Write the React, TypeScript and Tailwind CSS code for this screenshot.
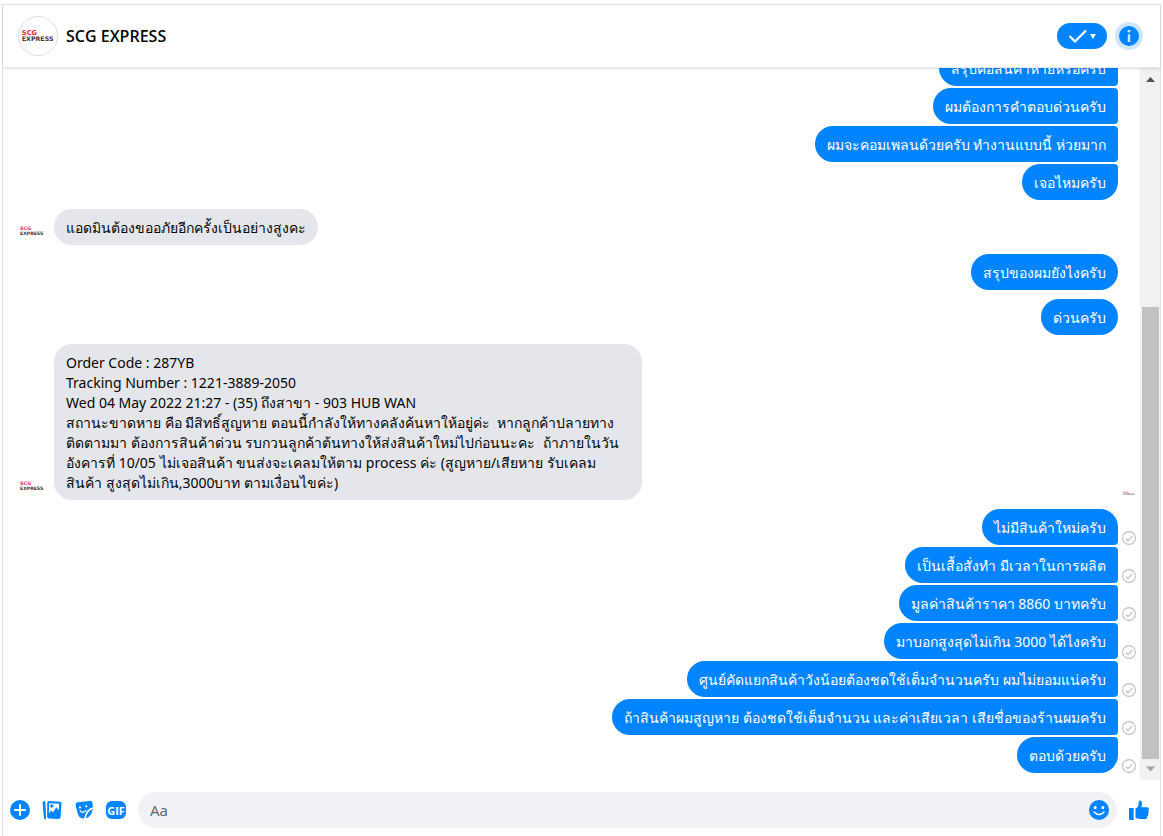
import React from "react";

type Message = { text: string; corners: string; delivered?: boolean };

const SINGLE = "rounded-[18px]";
const FIRST = "rounded-[18px] rounded-br-sm";
const MIDDLE = "rounded-l-[18px] rounded-r-sm";
const LAST = "rounded-[18px] rounded-tr-sm";

const complaint: Message[] = [
  { text: "สรุปคือสินค้าหายหรือครับ", corners: MIDDLE },
  { text: "ผมต้องการคำตอบด่วนครับ", corners: MIDDLE },
  { text: "ผมจะคอมเพลนด้วยครับ ทำงานแบบนี้ ห่วยมาก", corners: MIDDLE },
  { text: "เจอไหมครับ", corners: LAST },
];

const claim: Message[] = [
  { text: "ไม่มีสินค้าใหม่ครับ", corners: FIRST, delivered: true },
  { text: "เป็นเสื้อสั่งทำ มีเวลาในการผลิต", corners: MIDDLE, delivered: true },
  { text: "มูลค่าสินค้าราคา 8860 บาทครับ", corners: MIDDLE, delivered: true },
  { text: "มาบอกสูงสุดไม่เกิน 3000 ได้ไงครับ", corners: MIDDLE, delivered: true },
  { text: "ศูนย์คัดแยกสินค้าวังน้อยต้องชดใช้เต็มจำนวนครับ ผมไม่ยอมแน่ครับ", corners: MIDDLE, delivered: true },
  { text: "ถ้าสินค้าผมสูญหาย ต้องชดใช้เต็มจำนวน และค่าเสียเวลา เสียชื่อของร้านผมครับ", corners: MIDDLE, delivered: true },
  { text: "ตอบด้วยครับ", corners: LAST, delivered: true },
];

const orderLines = [
  "Order Code : 287YB",
  "Tracking Number : 1221-3889-2050",
  "Wed 04 May 2022 21:27 - (35) ถึงสาขา - 903 HUB WAN",
  "สถานะขาดหาย คือ มีสิทธิ์สูญหาย ตอนนี้กำลังให้ทางคลังค้นหาให้อยู่ค่ะ  หากลูกค้าปลายทาง",
  "ติดตามมา ต้องการสินค้าด่วน รบกวนลูกค้าต้นทางให้ส่งสินค้าใหม่ไปก่อนนะคะ  ถ้าภายในวัน",
  "อังคารที่ 10/05 ไม่เจอสินค้า ขนส่งจะเคลมให้ตาม process ค่ะ (สูญหาย/เสียหาย รับเคลม",
  "สินค้า สูงสุดไม่เกิน,3000บาท ตามเงื่อนไขค่ะ)",
];

function Logo({ className }: { className: string }) {
  return (
    <svg viewBox="0 0 40 40" className={className} role="img" aria-label="SCG EXPRESS">
      <g fontFamily="DejaVu Sans, sans-serif" fontWeight="bold">
        <text x="3" y="19" fontSize="7" fill="#dd2c35">SCG</text>
        <text x="3" y="25.6" fontSize="6.6" fill="#3c3838">EXPRESS</text>
      </g>
    </svg>
  );
}

function Delivered() {
  return (
    <svg viewBox="0 0 14 14" className="h-3.5 w-3.5" fill="none" stroke="#bcc0c4" role="img" aria-label="Delivered">
      <circle cx="7" cy="7" r="6.4" strokeWidth="1.1" />
      <path d="M3.8 7.5 6 9.6l4.3-4.7" strokeWidth="1.2" />
    </svg>
  );
}

function Sent({ messages }: { messages: Message[] }) {
  return (
    <div className="flex flex-col gap-0.5">
      {messages.map((m) => (
        <div key={m.text} className="flex items-end justify-end">
          <p className={`whitespace-nowrap bg-[#0084ff] px-3 pb-[7px] pt-[9px] text-white ${m.corners}`}>{m.text}</p>
          <span className="flex w-[22px] justify-center">{m.delivered && <Delivered />}</span>
        </div>
      ))}
    </div>
  );
}

function Received({ children, className = "" }: { children: React.ReactNode; className?: string }) {
  return (
    <div className="flex items-end pl-[15px]">
      <Logo className="mr-2 h-7 w-7 shrink-0" />
      <div className={`whitespace-pre rounded-[18px] bg-[#e4e6eb] px-3 pb-[7px] pt-[9px] text-[#050505] ${className}`}>{children}</div>
    </div>
  );
}

function IconButton({ label, children }: { label: string; children: React.ReactNode }) {
  return (
    <button type="button" aria-label={label} className="flex h-5 w-5 shrink-0 items-center justify-center text-[#0084ff]">
      {children}
    </button>
  );
}

export default function App() {
  return (
    <div className="h-screen bg-white px-0.5 pt-1 font-['Noto_Sans',sans-serif] text-[14px] leading-5">
      <main className="flex h-full flex-col border-x border-t border-[#e2e2e2]">
        <header className="z-10 flex h-[63px] shrink-0 items-center border-b border-[#e9e9e9] pl-[15px] pr-[17px] shadow-sm">
          <Logo className="h-10 w-10 rounded-full border border-[#dfdfdf]" />
          <h1 className="ml-2 flex-1 font-['Open_Sans',sans-serif] text-[16px] font-semibold text-[#050505]">SCG EXPRESS</h1>
          <button type="button" aria-label="Mark as done" className="flex h-[26px] w-[50px] items-center justify-center gap-0.5 rounded-full bg-[#0084ff]">
            <svg viewBox="0 0 20 16" className="h-4 w-5" fill="none" stroke="white" strokeWidth="2.2">
              <path d="m1.5 8 5.5 5.5L18 2.5" />
            </svg>
            <svg viewBox="0 0 6 6" className="h-1.5 w-1.5" fill="white"><path d="M0 1h6L3 6z" /></svg>
          </button>
          <button type="button" aria-label="Conversation information" className="ml-2 flex h-7 w-7 items-center justify-center rounded-full bg-[#cce6ff]">
            <svg viewBox="0 0 20 20" className="h-5 w-5">
              <circle cx="10" cy="10" r="10" fill="#0084ff" />
              <circle cx="10" cy="5.2" r="1.4" fill="#cce6ff" />
              <path d="M8.8 8.2h2.4V16H8.8z" fill="#cce6ff" />
            </svg>
          </button>
        </header>

        <div className="flex min-h-0 flex-1">
          <section aria-label="Messages" className="flex min-w-0 flex-1 flex-col justify-end gap-[9px] overflow-hidden pb-[7px]">
            <Sent messages={complaint} />
            <Received>แอดมินต้องขออภัยอีกครั้งเป็นอย่างสูงคะ</Received>
            <Sent messages={[{ text: "สรุปของผมยังไงครับ", corners: SINGLE }]} />
            <Sent messages={[{ text: "ด่วนครับ", corners: SINGLE }]} />
            <div className="flex items-end justify-between pr-1">
              <Received className="w-[588px]">
                {orderLines.map((line) => <p key={line}>{line}</p>)}
              </Received>
              <Logo className="h-3.5 w-3.5 opacity-70" />
            </div>
            <Sent messages={claim} />
          </section>
          <div aria-hidden="true" className="flex w-5 shrink-0 flex-col items-center bg-[#f1f1f1]">
            <svg viewBox="0 0 20 20" className="h-5 w-5 shrink-0"><path d="M6 14h9l-4.5-5z" fill="#505050" /></svg>
            <div className="w-[17px] flex-1 bg-[linear-gradient(to_bottom,transparent_32.6%,#c1c1c1_32.6%)]" />
            <svg viewBox="0 0 20 20" className="h-[21px] w-5 shrink-0"><path d="M6 7h9l-4.5 5z" fill="#a3a3a3" /></svg>
          </div>
        </div>

        <footer className="flex h-14 shrink-0 items-center gap-3 pl-[7px] pr-[11px] pt-1">
          <IconButton label="More actions">
            <svg viewBox="0 0 20 20" className="h-5 w-5">
              <circle cx="10" cy="10" r="10" fill="currentColor" />
              <path d="M10 5v10M5 10h10" stroke="white" strokeWidth="2" strokeLinecap="round" />
            </svg>
          </IconButton>
          <IconButton label="Attach photo">
            <svg viewBox="0 0 20 20" className="h-5 w-5">
              <path d="M1 2 2.9 1.6 3.6 19 2.5 18.6z" fill="currentColor" stroke="currentColor" strokeLinejoin="round" />
              <path d="m7 1 11 .8q1.7.2 1.5 2l-1 13.5q-.2 2-2 1.8l-10-.7q-1.5-.2-1.4-1.8L5.3 2.5Q5.5.9 7 1z" fill="currentColor" />
              <path d="m7.2 3.2 10 .6-.5 6.4-2.4-3-3.4 5.2-1.8-2-2.3 2.9z" fill="white" />
              <circle cx="9.8" cy="6" r="1.7" fill="currentColor" />
            </svg>
          </IconButton>
          <IconButton label="Choose a sticker">
            <svg viewBox="0 0 20 20" className="h-5 w-5">
              <path d="M4 2.3 15.5.9q2.7-.3 3 2.3l.4 4q-6.8 1.2-8.8 11.3-5.5-.1-6.5-5.6L1.6 5.5Q1.3 2.7 4 2.3z" fill="currentColor" />
              <path d="M18.7 9q-5.5 2.1-6.9 9.3 5.8-1.3 6.9-9.3z" fill="currentColor" />
              <circle cx="6" cy="7.4" r="1.1" fill="white" />
              <circle cx="12.3" cy="6.3" r="1.1" fill="white" />
              <path d="M6.2 10.8q2.4 3 5.6-.2" fill="none" stroke="white" strokeWidth="1.3" strokeLinecap="round" />
            </svg>
          </IconButton>
          <IconButton label="Choose a GIF">
            <span className="flex h-[18px] w-5 items-center justify-center rounded-md bg-[#0084ff] font-['Open_Sans',sans-serif] text-[11px] font-bold leading-none text-white">GIF</span>
          </IconButton>
          <div className="flex h-9 min-w-0 flex-1 items-center rounded-full bg-[#f0f2f5] pl-3 pr-2">
            <input aria-label="Message" placeholder="Aa" className="min-w-0 flex-1 bg-transparent text-[15px] outline-none placeholder:text-[#65676b]" />
            <IconButton label="Choose an emoji">
              <svg viewBox="0 0 20 20" className="h-5 w-5">
                <circle cx="10" cy="10" r="10" fill="currentColor" />
                <circle cx="6.2" cy="7.5" r="1.5" fill="white" />
                <circle cx="13.8" cy="7.5" r="1.5" fill="white" />
                <path d="M5 12q5 5 10 0" fill="none" stroke="white" strokeWidth="1.4" strokeLinecap="round" />
              </svg>
            </IconButton>
          </div>
          <IconButton label="Send a like">
            <svg viewBox="0 0 20 20" className="h-5 w-5" fill="currentColor">
              <path d="M0 8h4.7v12H0zM6.5 8.5C8.5 8 9.8 5.5 9.8 2.2 9.8-.4 13 0 13 3.6c0 1.4-.4 2.7-.7 3.7h5.6c2.2 0 2.7 2.3 1.2 3.2 1.2.9.9 2.5-.3 3 .9 1 .4 2.4-.7 2.7.6 1.5-.2 2.8-2.3 2.8H11c-2 0-3.1-.7-4.5-1.2z" />
            </svg>
          </IconButton>
        </footer>
      </main>
    </div>
  );
}
